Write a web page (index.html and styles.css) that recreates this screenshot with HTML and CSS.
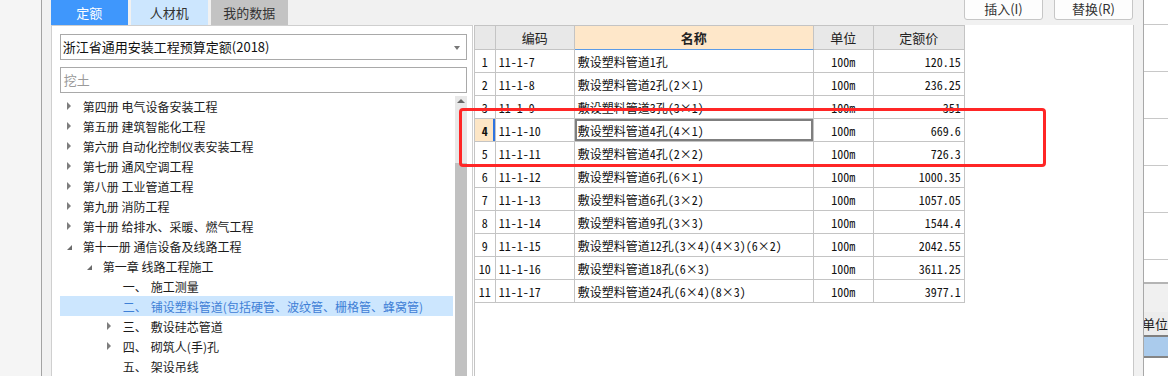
FILE: index.html
```html
<!DOCTYPE html>
<html lang="zh-CN">
<head>
    <meta charset="UTF-8" />
    <meta name="viewport" content="width=device-width, initial-scale=1.0" />
    <title>定额库</title>
    <link rel="stylesheet" href="styles.css">
</head>
<body>
    <div class="app">
        <div class="rail"></div>

        <!-- 定额库 -->
        <div class="lib">
            <div class="tabs">
                <div class="tab active">定额</div>
                <div class="tab light">人材机</div>
                <div class="tab gray">我的数据</div>
            </div>
            <div class="lib-panel">
                <div class="select">浙江省通用安装工程预算定额(2018)<span class="caret"></span></div>
                <div class="search">挖土</div>
                <div class="tree-wrap">
                    <div class="tree">
                        <div class="node"><span class="tw closed"></span>第四册 电气设备安装工程</div>
                        <div class="node"><span class="tw closed"></span>第五册 建筑智能化工程</div>
                        <div class="node"><span class="tw closed"></span>第六册 自动化控制仪表安装工程</div>
                        <div class="node"><span class="tw closed"></span>第七册 通风空调工程</div>
                        <div class="node"><span class="tw closed"></span>第八册 工业管道工程</div>
                        <div class="node"><span class="tw closed"></span>第九册 消防工程</div>
                        <div class="node"><span class="tw closed"></span>第十册 给排水、采暖、燃气工程</div>
                        <div class="node"><span class="tw open"></span>第十一册 通信设备及线路工程</div>
                        <div class="node lv1"><span class="tw open"></span>第一章 线路工程施工</div>
                        <div class="node lv2"><span class="tw"></span><span class="no">一、</span>施工测量</div>
                        <div class="node lv2 sel"><span class="tw"></span><span class="no">二、</span>铺设塑料管道(包括硬管、波纹管、栅格管、蜂窝管)</div>
                        <div class="node lv2"><span class="tw closed"></span><span class="no">三、</span>敷设硅芯管道</div>
                        <div class="node lv2"><span class="tw closed"></span><span class="no">四、</span>砌筑人(手)孔</div>
                        <div class="node lv2"><span class="tw"></span><span class="no">五、</span>架设吊线</div>
                    </div>
                    <div class="scrollbar">
                        <div class="sb-up"></div>
                        <div class="sb-thumb"></div>
                    </div>
                </div>
            </div>
        </div>

        <!-- 定额列表 -->
        <div class="main">
            <div class="toolbar">
                <button class="tool-btn">插入(I)</button>
                <button class="tool-btn">替换(R)</button>
            </div>
            <div class="grid-area">
                <table class="grid">
                    <colgroup>
                        <col style="width: 21px">
                        <col style="width: 79px">
                        <col style="width: 239px">
                        <col style="width: 60px">
                        <col style="width: 91px">
                    </colgroup>
                    <thead>
                        <tr class="head">
                            <th></th>
                            <th>编码</th>
                            <th class="sorted">名称</th>
                            <th>单位</th>
                            <th>定额价</th>
                        </tr>
                    </thead>
                    <tbody>
                        <tr><td class="rn">1</td><td>11-1-7</td><td>敷设塑料管道1孔</td><td class="unit">100m</td><td class="num">120.15</td></tr>
                        <tr><td class="rn">2</td><td>11-1-8</td><td>敷设塑料管道2孔(2×1)</td><td class="unit">100m</td><td class="num">236.25</td></tr>
                        <tr><td class="rn">3</td><td>11-1-9</td><td>敷设塑料管道3孔(3×1)</td><td class="unit">100m</td><td class="num">351</td></tr>
                        <tr class="current"><td class="rn">4</td><td>11-1-10</td><td class="focus">敷设塑料管道4孔(4×1)</td><td class="unit">100m</td><td class="num">669.6</td></tr>
                        <tr><td class="rn">5</td><td>11-1-11</td><td>敷设塑料管道4孔(2×2)</td><td class="unit">100m</td><td class="num">726.3</td></tr>
                        <tr><td class="rn">6</td><td>11-1-12</td><td>敷设塑料管道6孔(6×1)</td><td class="unit">100m</td><td class="num">1000.35</td></tr>
                        <tr><td class="rn">7</td><td>11-1-13</td><td>敷设塑料管道6孔(3×2)</td><td class="unit">100m</td><td class="num">1057.05</td></tr>
                        <tr><td class="rn">8</td><td>11-1-14</td><td>敷设塑料管道9孔(3×3)</td><td class="unit">100m</td><td class="num">1544.4</td></tr>
                        <tr><td class="rn">9</td><td>11-1-15</td><td>敷设塑料管道12孔(3×4)(4×3)(6×2)</td><td class="unit">100m</td><td class="num">2042.55</td></tr>
                        <tr><td class="rn">10</td><td>11-1-16</td><td>敷设塑料管道18孔(6×3)</td><td class="unit">100m</td><td class="num">3611.25</td></tr>
                        <tr><td class="rn">11</td><td>11-1-17</td><td>敷设塑料管道24孔(6×4)(8×3)</td><td class="unit">100m</td><td class="num">3977.1</td></tr>
                    </tbody>
                </table>
            </div>
        </div>

        <!-- 右侧面板 (被截断) -->
        <div class="extra">
            <div class="ex-row first"></div>
            <div class="ex-row"></div>
            <div class="ex-row"></div>
            <div class="ex-row"></div>
            <div class="ex-row"></div>
            <div class="ex-row"></div>
            <div class="ex-row last"></div>
            <div class="ex-gap"></div>
            <div class="ex-head">单位</div>
            <div class="ex-sel"></div>
        </div>
    </div>

    <!-- 标注框 -->
    <div class="mark"></div>
</body>
</html>
```

FILE: styles.css
```css
* {
    box-sizing: border-box;
}
body {
    margin: 0;
    background: #f1f1f1;
    font-family: "Noto Sans CJK SC", "Microsoft YaHei", sans-serif;
    font-size: 12px;
    color: #1b1b1b;
    position: relative;
    overflow: hidden;
}
.app {
    display: flex;
    width: 1168px;
    height: 376px;
    overflow: hidden;
}
.rail {
    width: 42px;
    background: #f5f5f5;
    border-right: 1px solid #a3a3a3;
}

/* left library */
.lib {
    width: 423px;
    margin-left: 9px;
    display: flex;
    flex-direction: column;
}
.tabs {
    height: 25px;
    display: flex;
    gap: 3px;
}
.tab {
    width: 77px;
    line-height: 25px;
    text-align: center;
    font-size: 13px;
    color: #333;
}
.tab.active {
    background: #3f97fc;
    color: #fff;
}
.tab.light {
    background: #cce6fe;
}
.tab.gray {
    background: #c3c3c3;
}
.lib-panel {
    flex: 1;
    background: #fff;
    border: 1px solid #cfcfcf;
    border-bottom: none;
    padding: 8px 5px 0 8px;
    display: flex;
    flex-direction: column;
    min-height: 0;
}
.select {
    height: 26px;
    border: 1px solid #a9a9a9;
    padding-left: 2px;
    font-size: 13px;
    line-height: 24px;
    color: #111;
    position: relative;
}
.caret {
    position: absolute;
    right: 6px;
    top: 11px;
    border-top: 4px solid #777;
    border-left: 3px solid transparent;
    border-right: 3px solid transparent;
}
.search {
    height: 26px;
    margin-top: 7px;
    border: 1px solid #a9a9a9;
    padding-left: 3px;
    font-size: 13px;
    line-height: 24px;
    color: #9a9a9a;
}
.tree-wrap {
    margin-top: 3px;
    flex: 1;
    display: flex;
    min-height: 0;
}
.tree {
    width: 393px;
    margin-right: 2px;
}
.node {
    height: 20px;
    display: flex;
    align-items: center;
    padding-left: 6px;
    white-space: nowrap;
}
.node.lv1 {
    padding-left: 26px;
}
.node.lv2 {
    padding-left: 46px;
}
.node.sel {
    background: #cce6fe;
    color: #3f80d6;
}
.tw {
    width: 17px;
    height: 20px;
    flex: none;
    position: relative;
}
.tw.closed::before {
    content: "";
    position: absolute;
    left: 1px;
    top: 6px;
    border-left: 4px solid #7d7d7d;
    border-top: 4px solid transparent;
    border-bottom: 4px solid transparent;
}
.tw.open::before {
    content: "";
    position: absolute;
    left: 1px;
    top: 9px;
    border-bottom: 5px solid #6b6b6b;
    border-left: 5px solid transparent;
}
.no {
    margin-right: 4px;
}
.scrollbar {
    width: 12px;
    background: #e8e8e8;
    display: flex;
    flex-direction: column;
}
.sb-up {
    height: 67px;
    position: relative;
}
.sb-up::before {
    content: "";
    position: absolute;
    left: 2px;
    top: 3px;
    border-bottom: 4px solid #666;
    border-left: 4px solid transparent;
    border-right: 4px solid transparent;
}
.sb-thumb {
    flex: 1;
    background: #c1c1c1;
}

/* main grid */
.main {
    width: 664px;
    display: flex;
    flex-direction: column;
}
.toolbar {
    height: 25px;
    display: flex;
    justify-content: flex-end;
    gap: 11px;
    padding-right: 1px;
}
.tool-btn {
    width: 79px;
    height: 23px;
    margin-top: -3px;
    border: 1px solid #c6c6c6;
    border-radius: 3px;
    background: #fdfdfd;
    font-family: "Noto Sans CJK SC", sans-serif;
    font-size: 13px;
    color: #333;
    padding: 0;
}
.grid-area {
    flex: 1;
    margin-left: 1px;
    background: #fff;
    border-left: 1px solid #c4c4c4;
    border-right: 1px solid #c8c8c8;
    box-shadow: -1px 0 0 #fff;
}
.grid {
    border-collapse: separate;
    border-spacing: 0;
    table-layout: fixed;
    width: 490px;
    font-family: "Noto Sans Mono CJK SC", "Liberation Mono", "Noto Sans CJK SC", monospace;
    font-size: 12px;
    color: #111;
}
.grid th,
.grid td {
    border-right: 1px solid #c4c4c4;
    border-bottom: 1px solid #c4c4c4;
    padding: 0 3px;
    white-space: nowrap;
    overflow: hidden;
}
.grid tr {
    height: 23px;
}
.grid tr.head {
    height: 25px;
}
.grid th {
    border-top: 1px solid #c4c4c4;
    background: #e8e8e8;
    font-family: "Noto Sans CJK SC", sans-serif;
    font-size: 13px;
    font-weight: normal;
    color: #222;
}
.grid th.sorted {
    background: #fee7c9;
    font-weight: bold;
    border-bottom-color: #5b9be6;
}
.grid td.rn {
    text-align: center;
    padding: 0;
}
.grid td.unit {
    text-align: center;
}
.grid td.num {
    text-align: right;
}
.grid tr.current td.rn {
    background: #fde6c6;
    font-weight: bold;
    box-shadow: inset -2px 0 0 #2f74e0;
}
.grid td.focus {
    box-shadow: inset 0 0 0 2px #7f7f7f;
}

/* clipped right panel */
.extra {
    flex: 1;
    margin-left: 9px;
    background: #fff;
    border-left: 1px solid #a8a8a8;
    display: flex;
    flex-direction: column;
}
.ex-row {
    height: 47px;
    border-bottom: 1px solid #c8c8c8;
    flex: none;
}
.ex-row.first {
    height: 25px;
}
.ex-row.last {
    height: 24px;
    border-bottom: 2px solid #b4b4b4;
}
.ex-gap {
    height: 28px;
    background: #f0f0f0;
    flex: none;
}
.ex-head {
    height: 25px;
    background: #ececec;
    border-bottom: 2px solid #808080;
    font-size: 13px;
    line-height: 24px;
    text-indent: -2px;
    white-space: nowrap;
    overflow: hidden;
    flex: none;
}
.ex-sel {
    height: 21px;
    background: #aacbec;
    border-bottom: 2px solid #858585;
    flex: none;
}

/* red annotation */
.mark {
    position: absolute;
    left: 459px;
    top: 108px;
    width: 587px;
    height: 59px;
    border: 3px solid #ff2626;
    border-radius: 4px;
}
```
